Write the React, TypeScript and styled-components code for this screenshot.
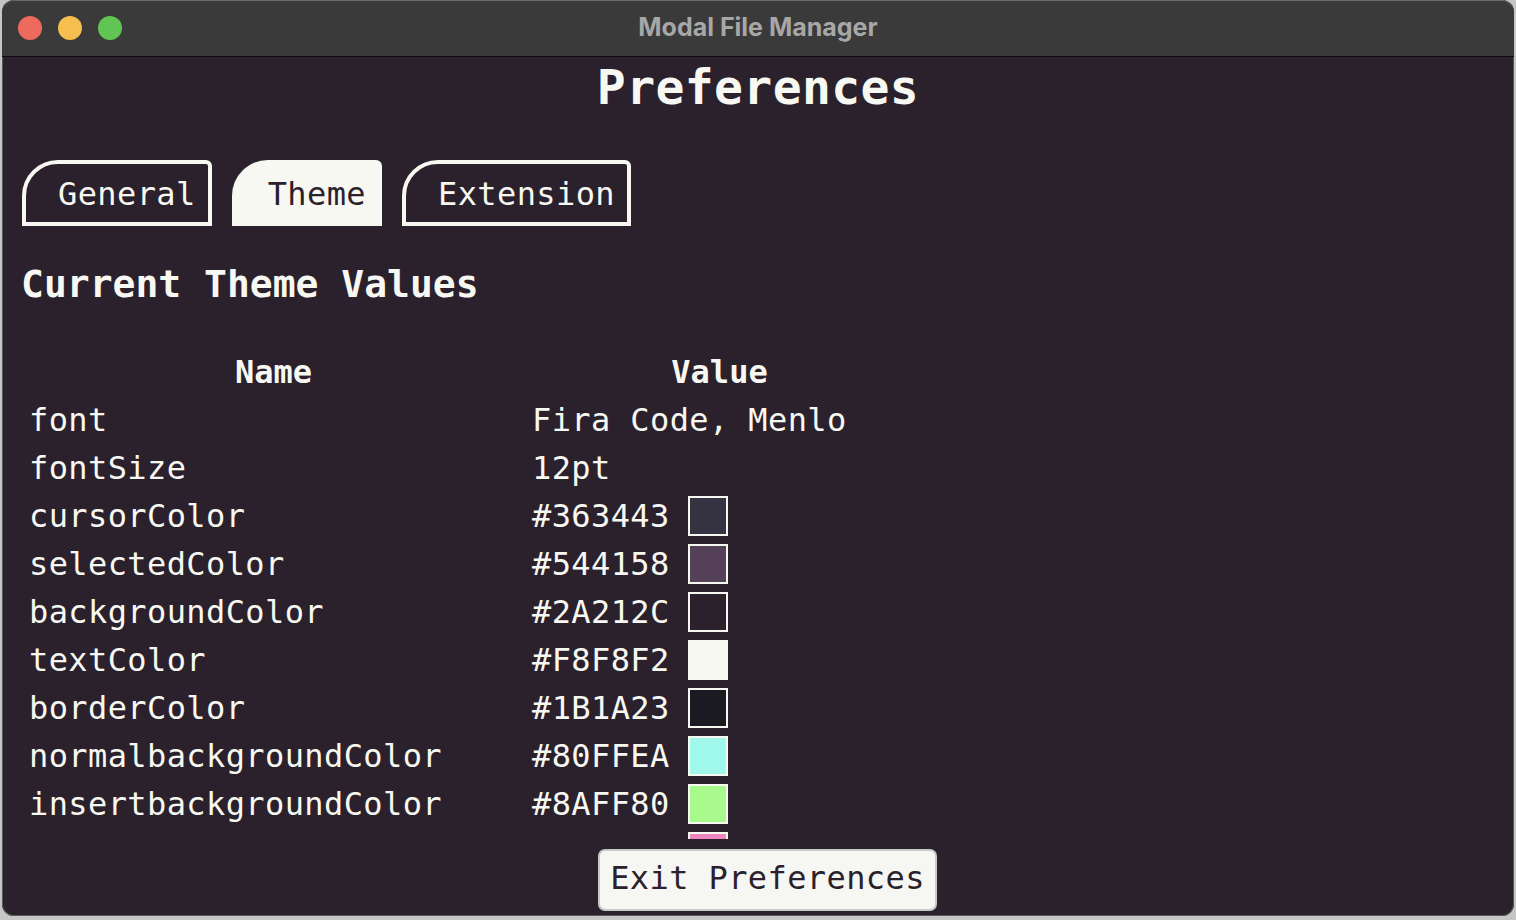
import React from "react";
import styled, { createGlobalStyle } from "styled-components";

const GlobalStyle = createGlobalStyle`
  html, body {
    margin: 0;
    padding: 0;
    background: #c6c6c6;
  }
  #root {
    width: 1516px;
    height: 920px;
  }
`;

const TEXT = "#f8f8f2";
const BG = "#2a212c";
const MONO = `"DejaVu Sans Mono", "Liberation Mono", monospace`;

const Window = styled.div`
  margin: 0 2px;
  height: 916px;
  display: flex;
  flex-direction: column;
  border-radius: 12px;
  overflow: hidden;
  background: ${BG};
  box-shadow: inset 0 0 0 1px #5a5a5a;
`;

const TitleBar = styled.div`
  position: relative;
  height: 56px;
  flex: 0 0 56px;
  display: flex;
  align-items: center;
  justify-content: center;
  background: #3b3a3a;
  border-bottom: 1px solid #0c0c0c;
  box-shadow: inset 0 1px 0 #6a6a6a;
  border-radius: 12px 12px 0 0;
`;

const Lights = styled.div`
  position: absolute;
  left: 16px;
  top: 16px;
  display: flex;
  gap: 16px;
`;

const Light = styled.span<{ $c: string }>`
  width: 24px;
  height: 24px;
  border-radius: 50%;
  background: ${(p) => p.$c};
`;

const WindowTitle = styled.div`
  font-family: Inter, "Open Sans", sans-serif;
  font-weight: 700;
  font-size: 25px;
  color: #a7a7a7;
  padding-bottom: 3px;
`;

const Content = styled.div`
  flex: 1;
  display: flex;
  flex-direction: column;
  padding: 0 20px;
  font-family: ${MONO};
  color: ${TEXT};
  min-height: 0;
`;

const PageTitle = styled.h1`
  margin: 2px 0 0;
  text-align: center;
  font-family: ${MONO};
  font-weight: 700;
  font-size: 48px;
  letter-spacing: 0.4px;
  line-height: 56px;
  height: 56px;
`;

const Tabs = styled.div`
  display: flex;
  gap: 20px;
  margin-top: 45px;
`;

const Tab = styled.div<{ $active?: boolean }>`
  height: 66px;
  box-sizing: border-box;
  border: 4px solid ${TEXT};
  border-radius: 36px 6px 0 0;
  background: ${(p) => (p.$active ? TEXT : "transparent")};
  color: ${(p) => (p.$active ? BG : TEXT)};
  padding: 2px 12px 0 32px;
  font-size: 32px;
  letter-spacing: 0.4px;
  line-height: 56px;
`;

const SectionHeading = styled.h2`
  margin: 36px 0 0 -1px;
  font-family: ${MONO};
  font-weight: 700;
  font-size: 38px;
  line-height: 44px;
`;

const TableArea = styled.div`
  margin-top: 42px;
  height: 491px;
  overflow: hidden;
  flex: 0 0 491px;
`;

const Row = styled.div`
  display: grid;
  grid-template-columns: 503px 389px;
  height: 48px;
  align-items: center;
`;

const HeadCell = styled.div`
  text-align: center;
  font-weight: 700;
  font-size: 32px;
  line-height: 48px;
`;

const Cell = styled.div`
  display: flex;
  align-items: center;
  padding-left: 7px;
  font-size: 32px;
  letter-spacing: 0.4px;
  line-height: 48px;
  white-space: nowrap;
`;

const Swatch = styled.span<{ $c: string }>`
  width: 40px;
  height: 40px;
  box-sizing: border-box;
  margin-left: 18px;
  border: 2px solid ${TEXT};
  background: ${(p) => p.$c};
`;

const ButtonRow = styled.div`
  display: flex;
  justify-content: center;
  padding-left: 19px;
  margin-top: 10px;
`;

const ExitButton = styled.button`
  height: 62px;
  box-sizing: border-box;
  padding: 0 10px 4px;
  border: 2px solid #c9c9c6;
  border-radius: 7px;
  background: #f6f6f2;
  color: #2a212c;
  font-family: ${MONO};
  font-size: 32px;
  letter-spacing: 0.4px;
  line-height: 54px;
`;

const rows: { name: string; value: string; shown?: string }[] = [
  { name: "font", value: "Fira Code, Menlo" },
  { name: "fontSize", value: "12pt" },
  { name: "cursorColor", value: "#363443", shown: "#363443" },
  { name: "selectedColor", value: "#544158", shown: "#544158" },
  { name: "backgroundColor", value: "#2A212C", shown: "#2A212C" },
  { name: "textColor", value: "#F8F8F2", shown: "#F8F8F2" },
  { name: "borderColor", value: "#1B1A23", shown: "#1B1A23" },
  { name: "normalbackgroundColor", value: "#80FFEA", shown: "#9ff8ea" },
  { name: "insertbackgroundColor", value: "#8AFF80", shown: "#a8fa8c" },
  { name: "visualbackgroundColor", value: "#FF80BF", shown: "#ef86c0" },
];

export default function App() {
  return (
    <>
      <GlobalStyle />
      <Window>
        <TitleBar>
          <Lights>
            <Light $c="#ee6a5f" />
            <Light $c="#f5bf4f" />
            <Light $c="#61c554" />
          </Lights>
          <WindowTitle>Modal File Manager</WindowTitle>
        </TitleBar>
        <Content>
          <PageTitle>Preferences</PageTitle>
          <Tabs>
            <Tab>General</Tab>
            <Tab $active>Theme</Tab>
            <Tab>Extension</Tab>
          </Tabs>
          <SectionHeading>Current Theme Values</SectionHeading>
          <TableArea>
            <Row>
              <HeadCell>Name</HeadCell>
              <HeadCell>Value</HeadCell>
            </Row>
            {rows.map((r) => (
              <Row key={r.name}>
                <Cell>{r.name}</Cell>
                <Cell>
                  {r.value}
                  {r.shown && <Swatch $c={r.shown} />}
                </Cell>
              </Row>
            ))}
          </TableArea>
          <ButtonRow>
            <ExitButton>Exit Preferences</ExitButton>
          </ButtonRow>
        </Content>
      </Window>
    </>
  );
}
